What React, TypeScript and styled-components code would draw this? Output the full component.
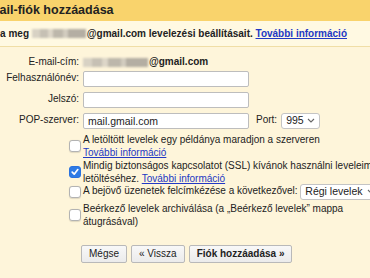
import React from "react";
import styled, { createGlobalStyle } from "styled-components";

const GlobalStyle = createGlobalStyle`
  html, body {
    margin: 0;
    padding: 0;
  }
  body {
    background: #fef5da;
    font-family: "Liberation Sans", Arial, sans-serif;
    color: #222;
  }
`;

const Viewport = styled.div`
  width: 370px;
  height: 278px;
  overflow: hidden;
  background: #fef5da;
`;

const Dialog = styled.div`
  margin-left: -24px;
  width: 460px;
`;

const TitleBar = styled.div`
  height: 21px;
  background: #f9d36c;
  font-size: 12.5px;
  font-weight: bold;
  line-height: 21px;
  white-space: nowrap;
`;

const Intro = styled.div`
  height: 25px;
  padding-left: 8px;
  background: #fff9e2;
  border-bottom: 1px solid #f0dea6;
  font-size: 10px;
  font-weight: bold;
  line-height: 25px;
  white-space: nowrap;
`;

const Link = styled.a`
  color: #2238c4;
  text-decoration: underline;
  cursor: pointer;
`;

const Redacted = styled.span<{ $w: number }>`
  display: inline-block;
  width: ${(p) => p.$w}px;
  height: 9px;
  margin-right: 1px;
  vertical-align: -1px;
  background: linear-gradient(
    90deg,
    #d8d2c4 0 14%,
    #c6c0b4 14% 30%,
    #ddd6c8 30% 38%,
    #bdb7ab 38% 58%,
    #d2ccbf 58% 66%,
    #b4aea3 66% 100%
  );
  filter: blur(1px);
`;

const Form = styled.div`
  padding: 9px 0 0 24px;
  font-size: 10px;
  line-height: 12.5px;
`;

const Row = styled.div<{ $top?: number }>`
  display: grid;
  grid-template-columns: 79px auto;
  column-gap: 4px;
  align-items: center;
  margin-top: ${(p) => p.$top ?? 0}px;
`;

const Label = styled.div`
  text-align: right;
  white-space: nowrap;
`;

const Value = styled.div`
  display: flex;
  align-items: center;
  white-space: nowrap;
`;

const Strong = styled.b`
  font-weight: bold;
`;

const Input = styled.input`
  box-sizing: border-box;
  width: 166px;
  height: 16px;
  padding: 0 4px;
  border: 1px solid #bdbdbd;
  border-radius: 2px;
  background: #fff;
  font-family: inherit;
  font-size: 10.5px;
  color: #222;
  outline: none;
`;

const Select = styled.div<{ $w: number }>`
  box-sizing: border-box;
  display: inline-flex;
  align-items: center;
  justify-content: space-between;
  width: ${(p) => p.$w}px;
  height: 16px;
  padding: 0 4px;
  border: 1px solid #c4c4c4;
  border-radius: 3px;
  background: #fff;
  font-size: 10.5px;
`;

const PortLabel = styled.span`
  margin: 0 4px 0 7px;
`;

const Box = styled.div`
  justify-self: end;
  margin-right: -2px;
  width: 12px;
  height: 12px;
`;

const Check = styled.span<{ $on?: boolean }>`
  box-sizing: border-box;
  display: flex;
  align-items: center;
  justify-content: center;
  width: 12px;
  height: 12px;
  border-radius: 3px;
  border: 1px solid ${(p) => (p.$on ? "#2a72de" : "#b3b3b3")};
  background: ${(p) => (p.$on ? "#2f7be5" : "#fff")};
  box-shadow: ${(p) => (p.$on ? "none" : "0 0.5px 1px rgba(0,0,0,0.12)")};
`;

const OptionText = styled.div`
  white-space: nowrap;
  line-height: 13px;
`;

const Buttons = styled.div`
  display: flex;
  gap: 4px;
  grid-column: 2;
  margin-left: -2px;
`;

const Button = styled.button<{ $primary?: boolean }>`
  height: 18px;
  padding: 0 7px;
  border: 1px solid #b9b9b9;
  border-radius: 2px;
  background: linear-gradient(#f8f8f8, #ebebeb);
  font-family: inherit;
  font-size: 10px;
  font-weight: ${(p) => (p.$primary ? "bold" : "normal")};
  color: #222;
`;

function Chevron() {
  return (
    <svg width="8" height="5" viewBox="0 0 8 5">
      <path d="M1 1 L4 4 L7 1" fill="none" stroke="#666" strokeWidth="1.1" />
    </svg>
  );
}

function Checkbox({ on }: { on?: boolean }) {
  return (
    <Box>
      <Check $on={on}>
        {on && (
          <svg width="10" height="10" viewBox="0 0 10 10">
            <path
              d="M2.2 5.2 L4.2 7.2 L7.8 2.6"
              fill="none"
              stroke="#fff"
              strokeWidth="1.7"
              strokeLinecap="round"
              strokeLinejoin="round"
            />
          </svg>
        )}
      </Check>
    </Box>
  );
}

export default function App() {
  return (
    <Viewport>
      <GlobalStyle />
      <Dialog>
        <TitleBar>E-mail-fiók hozzáadása</TitleBar>
        <Intro>
          Adja meg <Redacted $w={54} />
          @gmail.com levelezési beállításait. <Link>További információ</Link>
        </Intro>
        <Form>
          <Row>
            <Label>E-mail-cím:</Label>
            <Value>
              <Redacted $w={65} />
              <Strong>@gmail.com</Strong>
            </Value>
          </Row>

          <Row $top={2}>
            <Label>Felhasználónév:</Label>
            <Value>
              <Input />
            </Value>
          </Row>

          <Row $top={5}>
            <Label>Jelszó:</Label>
            <Value>
              <Input type="password" />
            </Value>
          </Row>

          <Row $top={5}>
            <Label>POP-szerver:</Label>
            <Value>
              <Input defaultValue="mail.gmail.com" />
              <PortLabel>Port:</PortLabel>
              <Select $w={39}>
                995 <Chevron />
              </Select>
            </Value>
          </Row>

          <Row $top={4}>
            <Checkbox />
            <OptionText>
              A letöltött levelek egy példánya maradjon a szerveren
              <br />
              <Link>További információ</Link>
            </OptionText>
          </Row>

          <Row>
            <Checkbox on />
            <OptionText>
              Mindig biztonságos kapcsolatot (SSL) kívánok használni leveleim
              <br />
              letöltéséhez. <Link>További információ</Link>
            </OptionText>
          </Row>

          <Row $top={-1}>
            <Checkbox />
            <Value>
              A bejövő üzenetek felcímkézése a következővel:&nbsp;
              <Select $w={80}>
                Régi levelek <Chevron />
              </Select>
            </Value>
          </Row>

          <Row $top={2}>
            <Checkbox />
            <OptionText>
              Beérkező levelek archiválása (a „Beérkező levelek” mappa
              <br />
              átugrásával)
            </OptionText>
          </Row>

          <Row $top={17}>
            <Buttons>
              <Button>Mégse</Button>
              <Button>« Vissza</Button>
              <Button $primary>Fiók hozzáadása »</Button>
            </Buttons>
          </Row>
        </Form>
      </Dialog>
    </Viewport>
  );
}
